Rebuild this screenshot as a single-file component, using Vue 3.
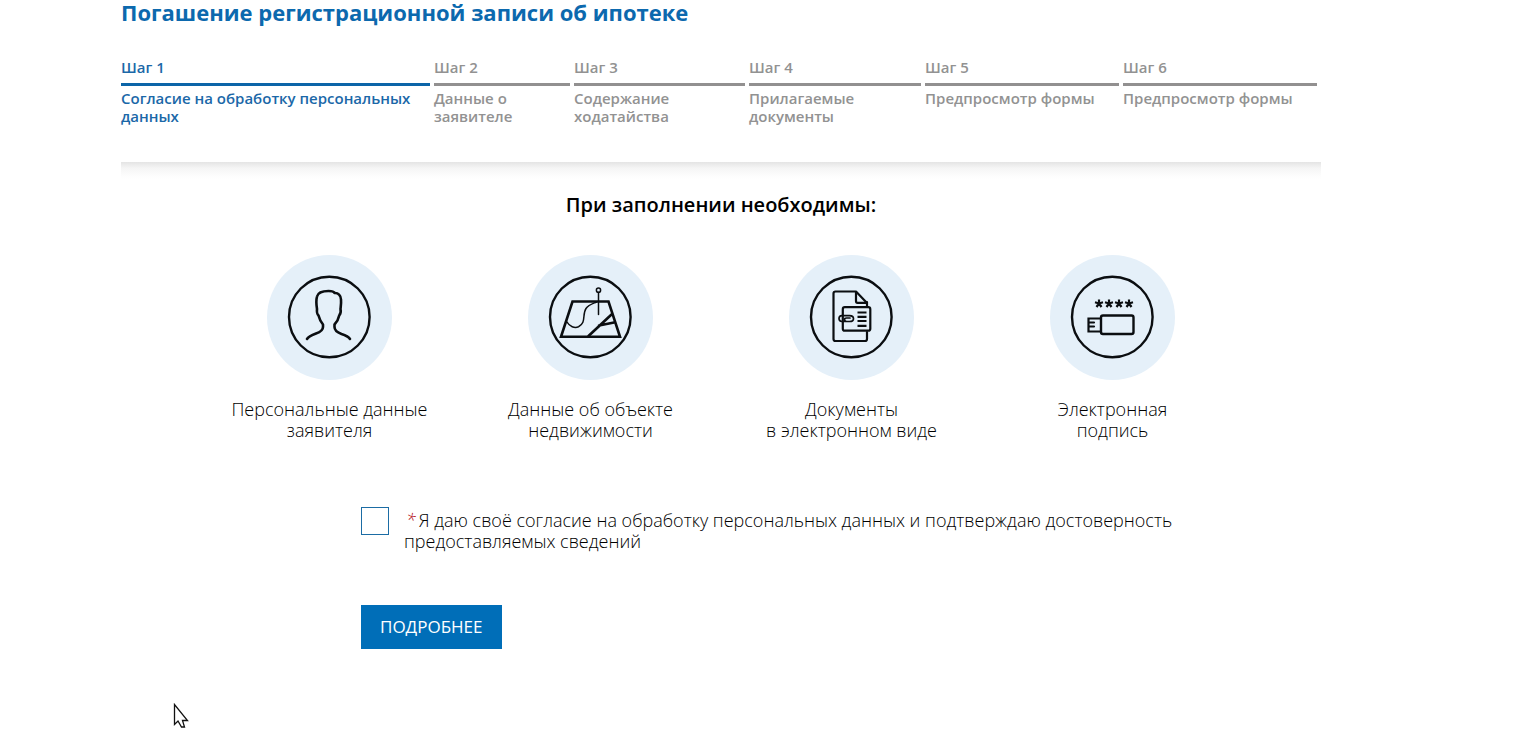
<script setup>
import { ref } from 'vue'

const agreed = ref(false)

const steps = [
  'Согласие на обработку персональных данных',
  'Данные о заявителе',
  'Содержание ходатайства',
  'Прилагаемые документы',
  'Предпросмотр формы',
  'Предпросмотр формы',
]

const needs = [
  { icon: 'person', lines: ['Персональные данные', 'заявителя'] },
  { icon: 'plot', lines: ['Данные об объекте', 'недвижимости'] },
  { icon: 'documents', lines: ['Документы', 'в электронном виде'] },
  { icon: 'token', lines: ['Электронная', 'подпись'] },
]

const stars = [49, 59, 69, 79]
</script>

<template>
  <main class="page">
    <h1 class="title">Погашение регистрационной записи об ипотеке</h1>

    <ol class="steps">
      <li v-for="(name, i) in steps" :key="i" class="step" :class="{ active: i === 0 }">
        <div class="step-number">Шаг {{ i + 1 }}</div>
        <div class="step-name">{{ name }}</div>
      </li>
    </ol>

    <section class="content">
      <h2 class="subtitle">При заполнении необходимы:</h2>

      <ul class="needs">
        <li v-for="need in needs" :key="need.icon" class="need">
          <svg class="need-icon" viewBox="0 0 125 125" aria-hidden="true">
            <circle cx="62.5" cy="62.5" r="62.5" fill="#e5f0f9" />
            <g fill="none" stroke="#0b0e11" stroke-width="2.2" stroke-linecap="round" stroke-linejoin="round">
              <circle cx="62.3" cy="62" r="40.3" stroke-width="2.4" />
              <g v-if="need.icon === 'person'">
                <path d="M40 84C41.500 81.500 45 80 49 78.500C53.500 77 56 75.500 56 72V69.500C54 67 52.500 64.500 51.500 60.500C50.300 59.500 49.700 57 50 54C49.200 49 49.300 44 50 41.500C51 37.500 55 36 61.500 36C65 36 67 36.800 67.500 38C71 37.500 74 40.500 74 44.500C74.300 48 73.800 51 73.500 54C74.200 57 73 59.500 72.200 60.500C71.500 64 70 67 67.500 69.500V72C67.500 76 70.500 77.500 74.500 79C78.500 80.300 81.500 81.500 83 84" stroke-width="2.600" />
              </g>
              <g v-else-if="need.icon === 'plot'">
                <path d="M44.500 46.500H80.500L92 81.800H33Z" stroke-linejoin="miter" stroke-width="2.600" />
                <path d="M60.500 81L83.500 59.500M71 70.500L86 67.500" stroke-width="2.600" />
                <path d="M39 67C41.500 71.500 46.500 73.500 50.500 71.800C58.500 68 54 59.500 58 53.500C60.500 50 64 49 68.500 47" stroke-width="1.500" />
                <path d="M70.500 37.500V59.500" stroke-width="1.500" />
                <circle cx="70.500" cy="35.200" r="2.100" stroke-width="1.500" />
              </g>
              <g v-else-if="need.icon === 'documents'">
                <path d="M78 47V51M78 77V84Q78 86 76 86H46.500Q44.500 86 44.500 84V38.500Q44.500 36.500 46.500 36.500H67L78 48" />
                <path d="M67 37V46Q67 47.800 68.500 47.800H77" />
                <rect x="53.800" y="52.200" width="27.500" height="23.500" rx="2" />
                <path d="M68.500 57.500H77.500M68.500 61.800H77.500M68.500 66H77.500M68.500 70.800H77.500" stroke-linecap="butt" />
                <path d="M60.500 66.500H53Q50 66.300 50 63.500Q50 60.700 53 60.600H60.500Q64.500 60.800 64.500 63.700Q64.500 66.500 60.500 66.500H57.500Q55.500 66.200 55.500 64.500Q55.500 63 57.500 63H61" stroke-width="1.700" />
              </g>
              <g v-else>
                <rect x="51" y="60.500" width="32.500" height="18.500" rx="2" stroke-width="2.400" />
                <path d="M50.500 63.500H38.500V76.500H50.500M40 67.500H44M40 71.500H44" stroke-width="2.200" stroke-linejoin="miter" />
                <path v-for="x in stars" :key="x" :d="`M${x} 48.500v-4M${x} 48.500l-4 -1.200M${x} 48.500l4 -1.200M${x} 48.500l-2.500 3.500M${x} 48.500l2.500 3.500`" stroke-width="2.200" stroke-linecap="butt" />
              </g>
            </g>
          </svg>
          <p class="need-text">{{ need.lines[0] }}<br />{{ need.lines[1] }}</p>
        </li>
      </ul>

      <form class="consent" @submit.prevent>
        <div class="consent-row">
          <input id="agree" v-model="agreed" class="consent-box" type="checkbox" />
          <label for="agree" class="consent-text"><em class="required">*</em>Я даю своё согласие на обработку персональных данных и подтверждаю достоверность предоставляемых сведений</label>
        </div>
        <button class="more" type="submit">ПОДРОБНЕЕ</button>
      </form>
    </section>

    <svg class="cursor" viewBox="0 0 16 26" aria-hidden="true">
      <path d="M1.500 1.500V21.500L5 18L8.500 24H11.500L9.500 17.500H14.500Z" fill="#fff" stroke="#111" stroke-width="1.300" />
    </svg>
  </main>
</template>

<style>
body {
  margin: 0;
  background: #fff;
}
</style>

<style scoped>
.page {
  max-width: 1200px;
  margin: 0 87px 0 121px;
  font-family: "Open Sans", "Noto Sans", sans-serif;
  color: #000;
}

.title {
  margin: 0;
  padding-bottom: 34px;
  font-size: 22px;
  line-height: 24px;
  font-weight: 700;
  color: #0c69ae;
}

.steps {
  display: grid;
  grid-template-columns: 309fr 136fr 171fr 172fr 194fr 194fr;
  gap: 4px;
  margin: 0;
  padding: 0 4px 37px 0;
  list-style: none;
  font-size: 15px;
  line-height: 18px;
  font-weight: 600;
  color: #929292;
}

.step-number {
  padding-bottom: 7px;
  border-bottom: 3px solid #929090;
}

.step-name {
  padding-top: 3px;
}

.active {
  color: #1b68a8;
}

.active .step-number {
  border-color: #0c65a8;
}

.content {
  padding-top: 30px;
  background: linear-gradient(#e4e4e4, #f5f5f5 6px, #fdfdfd 14px, #fff 18px) no-repeat top / 100% 18px;
}

.subtitle {
  margin: 0;
  font-size: 20px;
  line-height: 26px;
  font-weight: 600;
  text-align: center;
}

.needs {
  display: grid;
  grid-template-columns: repeat(4, 1fr);
  margin: 0;
  padding: 37px 78px 0;
  list-style: none;
}

.need {
  text-align: center;
}

.need-icon {
  display: block;
  width: 125px;
  height: 125px;
  margin: 0 auto;
}

.need-text {
  margin: 19px 0 0;
  font-size: 18px;
  line-height: 21px;
  font-weight: 300;
}

.consent {
  padding: 66px 120px 0 240px;
}

.consent-row {
  display: flex;
  align-items: flex-start;
  gap: 15px;
}

.consent-box {
  appearance: none;
  box-sizing: border-box;
  flex: none;
  width: 28px;
  height: 28px;
  margin: 0;
  border: 1px solid #1b6ca4;
  background: #fff;
}

.consent-box:checked {
  background: #006eb8;
}

.consent-text {
  padding-top: 3px;
  font-size: 18px;
  line-height: 21px;
  font-weight: 300;
}

.required {
  display: inline-block;
  padding: 0 3px 0 2px;
  color: #b5121b;
}

.more {
  display: block;
  height: 44px;
  margin: 53px 0 0;
  padding: 0 19px;
  border: 0;
  background: #006eb8;
  color: #fff;
  font: 400 17px/42px "Open Sans", "Noto Sans", sans-serif;
}

.cursor {
  position: absolute;
  left: 173px;
  top: 703px;
  width: 16px;
  height: 26px;
}
</style>
